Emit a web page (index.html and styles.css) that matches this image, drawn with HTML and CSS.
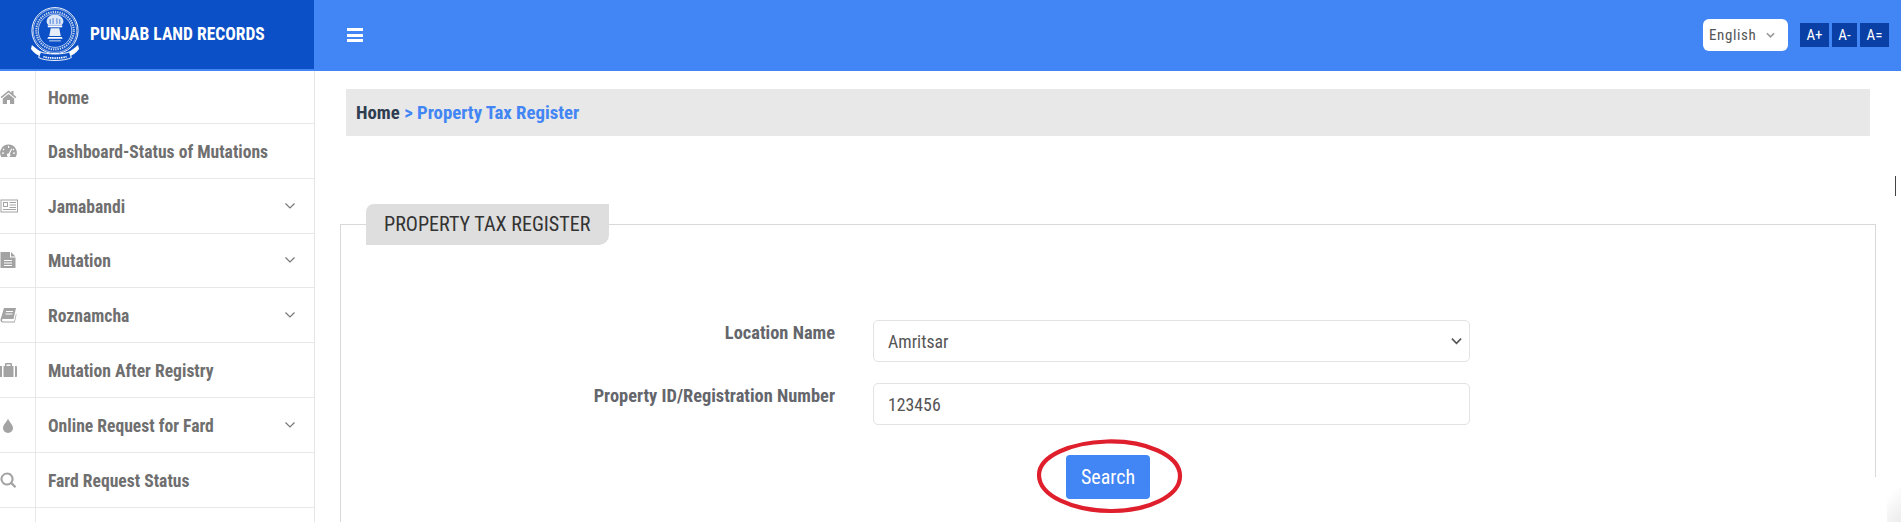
FILE: index.html
```html
<!DOCTYPE html>
<html lang="en">
<head>
<meta charset="utf-8">
<title>Property Tax Register</title>
<link rel="stylesheet" href="styles.css">
</head>
<body>
<header class="topbar">
  <div class="brand">
    <svg class="emblem" viewBox="0 0 52 58" aria-hidden="true">
      <g fill="none" stroke="#fff">
        <circle cx="26" cy="25" r="24" stroke-width="1"/>
        <circle cx="26" cy="25" r="22.6" stroke-width=".6"/>
        <circle cx="26" cy="25" r="19.5" stroke-width="2.2" stroke-dasharray="1.4 1" opacity=".75"/>
        <circle cx="26" cy="25" r="17.4" stroke-width=".7"/>
      </g>
      <g fill="#fff">
        <path d="M17.500 14c1-3.500 4-5.500 8.500-5.500s7.500 2 8.500 5.500c.8 2-.2 4-1.500 5H19c-1.300-1-2.300-3-1.500-5z" opacity=".85"/>
        <rect x="18.500" y="19.500" width="15" height="2"/>
        <path d="M21.500 22.500h9l1.500 8h-12z" opacity=".9"/>
        <path d="M19 31.500h14l1 2H18z"/>
        <path d="M20 35h12v1.200H20z" opacity=".7"/>
        <path d="M2 40c4 3 7 6 11 8l-1 4c-4-1-8-4-11-8z"/>
        <path d="M50 40c-4 3-7 6-11 8l1 4c4-1 8-4 11-8z"/>
      </g>
      <path d="M24 12v6M28 12v6M21 13v5M31 13v5" stroke="#0b50c6" stroke-width=".7"/>
      <path d="M11 47c5 3 25 3 30 0l2 6c-7 4-27 4-34 0z" fill="#0b50c6" stroke="#fff" stroke-width="1"/>
      <path d="M14 52c6 2 18 2 24 0" fill="none" stroke="#fff" stroke-width="1.800" stroke-dasharray="1.500 .8"/>
    </svg>
    <span class="brand-name">PUNJAB LAND RECORDS</span>
  </div>
  <div class="bar">
    <button class="menu-toggle" type="button" aria-label="Menu"><span></span><span></span><span></span></button>
    <div class="bar-tools">
      <select class="lang"><option>English</option></select>
      <div class="font-sizes">
        <button class="size-btn" type="button">A+</button>
        <button class="size-btn narrow" type="button">A-</button>
        <button class="size-btn" type="button">A=</button>
      </div>
    </div>
  </div>
</header>

<div class="layout">
  <nav class="sidebar">
    <ul class="nav-list">
      <li class="nav-item">
        <span class="nav-icon"><svg viewBox="0 0 18 18"><path d="M8.500 2.500.6 9l1 1.200L8.500 4.500l6.900 5.700 1-1.200-2.900-2.400V3h-2v1.800zM2.800 10.600l5.700-4.700 5.700 4.700V16H10v-4H7v4H2.800z"/></svg></span>
        <a class="nav-label">Home</a>
      </li>
      <li class="nav-item">
        <span class="nav-icon"><svg viewBox="0 0 18 18"><path fill-rule="evenodd" d="M8.500 2.500A8.300 8.300 0 0 0 1.300 15H15.700A8.300 8.300 0 0 0 8.500 2.500zM8 4h1.200v2H8zM3.500 6.500l1 1-.9.900-1-1zM13.500 6.500l.9.900-1 1-.9-.9zM2 10.500h2v1.200H2zM13 10.500h2v1.200h-2zM11.200 6.500l.9.500L9.800 12a1.700 1.700 0 1 1-1.100-.5z"/></svg></span>
        <a class="nav-label">Dashboard-Status of Mutations</a>
      </li>
      <li class="nav-item">
        <span class="nav-icon"><svg viewBox="0 0 18 18"><path fill-rule="evenodd" d="M.5 2.500H18v13H.5zM1.500 3.500v11H17v-11zM3 5h5v5H3zM4 6v3h3V6zM9.500 5H16v1H9.500zM9.500 7.500H16v1H9.500zM9.500 10H16v1H9.500zM3 12h13v1H3z"/></svg></span>
        <a class="nav-label">Jamabandi</a>
        <svg class="chevron" viewBox="0 0 12 8"><path d="M1.500 1.500 6 6l4.500-4.500"/></svg>
      </li>
      <li class="nav-item">
        <span class="nav-icon"><svg viewBox="0 0 18 18"><path fill-rule="evenodd" d="M.5 1H10v5.500h5.500V17H.5zM4 9v1h8V9zM4 11.500v1h8v-1zM4 14v1h8v-1zM11 1l4.500 4.500H11z"/></svg></span>
        <a class="nav-label">Mutation</a>
        <svg class="chevron" viewBox="0 0 12 8"><path d="M1.500 1.500 6 6l4.500-4.500"/></svg>
      </li>
      <li class="nav-item">
        <span class="nav-icon"><svg viewBox="0 0 18 18"><path fill-rule="evenodd" d="M4 2h12l-2.500 11H3.500c-1 0-1.500.6-1.500 1.200S2.500 15.500 3.500 15.500h10.800l1.700-8 .5 1-1.700 8H3C1.500 16.500.5 15.500.5 14c0-.5.1-1 .3-1.500zM6 5v1h7V5zM5.500 7.500v1h7v-1z"/></svg></span>
        <a class="nav-label">Roznamcha</a>
        <svg class="chevron" viewBox="0 0 12 8"><path d="M1.500 1.500 6 6l4.500-4.500"/></svg>
      </li>
      <li class="nav-item">
        <span class="nav-icon"><svg viewBox="0 0 18 18"><path fill-rule="evenodd" d="M0 5h2v11H0zM3.500 5H5V3.200C5 2.500 5.500 2 6.200 2h4.600c.7 0 1.200.5 1.200 1.200V5h1.500v11h-10zM6.500 3.500V5h4V3.500zM15 5h1c.6 0 1 .4 1 1v9c0 .6-.4 1-1 1h-1z"/></svg></span>
        <a class="nav-label">Mutation After Registry</a>
      </li>
      <li class="nav-item">
        <span class="nav-icon"><svg viewBox="0 0 18 18"><path d="M8 2.500c-.5 2.500-5 6-5 9.500a5 5 0 0 0 10 0c0-3.500-4.500-7-5-9.500z"/></svg></span>
        <a class="nav-label">Online Request for Fard</a>
        <svg class="chevron" viewBox="0 0 12 8"><path d="M1.500 1.500 6 6l4.500-4.500"/></svg>
      </li>
      <li class="nav-item">
        <span class="nav-icon"><svg viewBox="0 0 18 18"><path fill-rule="evenodd" d="M7 1.500a6.500 6.500 0 1 0 3.900 11.700l3.800 3.800 1.600-1.600-3.800-3.800A6.500 6.500 0 0 0 7 1.500zM7 3.500a4.500 4.500 0 1 1 0 9 4.500 4.500 0 0 1 0-9z"/></svg></span>
        <a class="nav-label">Fard Request Status</a>
      </li>
      <li class="nav-item"><span class="nav-icon"></span></li>
    </ul>
  </nav>

  <main class="content">
    <div class="crumbs"><span class="crumb-home">Home</span> <span class="crumb-current">&gt; Property Tax Register</span></div>

    <fieldset class="panel">
      <legend class="panel-title">PROPERTY TAX REGISTER</legend>
      <form class="form">
        <div class="field">
          <label class="field-label" for="loc">Location Name</label>
          <select class="control select" id="loc"><option>Amritsar</option></select>
        </div>
        <div class="field">
          <label class="field-label" for="pid">Property ID/Registration Number</label>
          <input class="control" id="pid" type="text" value="123456">
        </div>
        <div class="actions">
          <div class="action-wrap">
            <button class="search-btn" type="button">Search</button>
            <svg class="circled" viewBox="0 0 145 74" aria-hidden="true"><path d="M70 2.500C108 1.500 143 16 143 37c0 20-32 35.500-70 35C36 71.500 2 57 2 36 2 17 34 3.500 70 2.500z"/></svg>
          </div>
        </div>
      </form>
    </fieldset>

    <div class="edge-patch"></div>
    <div class="caret-mark"></div>
    <div class="corner-shade"></div>
  </main>
</div>
</body>
</html>
```
FILE: styles.css
```css
* { box-sizing: border-box; }

html, body {
  margin: 0;
  height: 522px;
  overflow: hidden;
  background: #fff;
}

body {
  font-family: Roboto, "Liberation Sans", sans-serif;
  font-stretch: 75%;
  color: #333;
}

.topbar {
  display: flex;
  height: 71px;
  background: #4285f4;
}

.brand {
  display: flex;
  align-items: flex-start;
  width: 314px;
  height: 69px;
  padding: 6px 0 0 30px;
  background: #0b50c6;
}

.emblem {
  width: 50px;
  height: 57px;
  flex: none;
}

.brand-name {
  margin: 18px 0 0 10px;
  color: #fff;
  font-size: 17.500px;
  line-height: 20px;
  font-weight: 700;
  white-space: nowrap;
}

.bar {
  flex: 1;
  display: flex;
  align-items: center;
  justify-content: space-between;
  height: 70px;
  padding: 0 12px 0 33px;
}

.menu-toggle {
  display: flex;
  flex-direction: column;
  justify-content: space-between;
  width: 16px;
  height: 14px;
  padding: 0;
  border: 0;
  background: none;
}

.menu-toggle span {
  display: block;
  height: 3px;
  background: #fff;
}

.bar-tools {
  display: flex;
  align-items: center;
  gap: 12px;
}

.lang {
  width: 85px;
  height: 32px;
  padding: 0 6px;
  border: 0;
  border-radius: 6px;
  appearance: none;
  background: #fff url("data:image/svg+xml,%3Csvg xmlns='http://www.w3.org/2000/svg' viewBox='0 0 10 7'%3E%3Cpath d='M1 1l4 4 4-4' fill='none' stroke='%23999' stroke-width='1.800'/%3E%3C/svg%3E") no-repeat right 13px center / 9px 7px;
  color: #555;
  font: inherit;
  font-size: 15px;
  letter-spacing: .6px;
}

.font-sizes {
  display: flex;
  gap: 3px;
}

.size-btn {
  width: 29px;
  height: 24px;
  padding: 0;
  border: 0;
  background: #0a3fa6;
  color: #fff;
  font: inherit;
  font-size: 15px;
}

.size-btn.narrow { width: 25px; }

.layout {
  display: flex;
  height: 451px;
}

.sidebar {
  width: 315px;
  flex: none;
  border-right: 1px solid #e6e6e6;
}

.nav-list {
  margin: 0;
  padding: 0;
  list-style: none;
}

.nav-item {
  display: flex;
  align-items: center;
  height: 54.800px;
  border-bottom: 1px solid #e8e8e8;
}

.nav-item:nth-child(1) { height: 53px; }
.nav-item:last-child { height: 20px; border-bottom: 0; }

.nav-icon {
  display: flex;
  align-items: center;
  width: 36px;
  height: 100%;
  flex: none;
  border-right: 1px solid #e8e8e8;
}

.nav-icon svg {
  width: 18px;
  height: 18px;
  fill: #a3a3a3;
}

.nav-label {
  flex: 1;
  padding: 2px 0 0 12px;
  color: #6f6f6f;
  font-size: 17.600px;
  font-weight: 700;
  white-space: nowrap;
}

.chevron {
  width: 12px;
  height: 8px;
  margin-right: 18px;
  fill: none;
  stroke: #777;
  stroke-width: 1.200;
}

.content {
  position: relative;
  flex: 1;
  padding: 18px 0 0;
  overflow: hidden;
}

.crumbs {
  height: 47px;
  margin: 0 31px;
  padding-left: 10px;
  background: #e8e8e8;
  font-size: 18.800px;
  line-height: 48px;
  font-weight: 700;
}

.crumb-home { color: #2e3d50; }
.crumb-current { color: #4285f4; }

.panel {
  height: 400px;
  margin: 68px 25px 0;
  padding: 0;
  border: 1px solid #d9d9d9;
}

.panel-title {
  height: 41px;
  margin-left: 25px;
  padding: 0 19px 0 18px;
  border-radius: 8px 0 10px 0;
  background: #dedede;
  color: #333;
  font-size: 20.100px;
  line-height: 41px;
}

.form { padding-top: 75px; }

.field {
  display: grid;
  grid-template-columns: 494px 597px;
  column-gap: 38px;
  margin-bottom: 21px;
}

.field-label {
  padding-top: 1px;
  color: #64666c;
  font-size: 18.400px;
  line-height: 24px;
  font-weight: 700;
  text-align: right;
}

.control {
  width: 100%;
  height: 42px;
  padding: 1px 14px 0;
  border: 1px solid #e3e3e3;
  border-radius: 5px;
  background: #fff;
  color: #555;
  font: inherit;
  font-size: 17.800px;
}

.select {
  appearance: none;
  background: #fff url("data:image/svg+xml,%3Csvg xmlns='http://www.w3.org/2000/svg' viewBox='0 0 12 8'%3E%3Cpath d='M1 1.500l5 5 5-5' fill='none' stroke='%23555' stroke-width='1.800'/%3E%3C/svg%3E") no-repeat right 7px center / 11px 8px;
}

.actions {
  display: flex;
  justify-content: center;
  margin-top: 30px;
}

.action-wrap { position: relative; }

.search-btn {
  display: block;
  width: 84px;
  height: 44px;
  padding: 0;
  border: 0;
  border-radius: 4px;
  background: #4285f4;
  color: #fff;
  font: inherit;
  font-size: 20px;
}

.circled {
  position: absolute;
  left: -29px;
  top: -16px;
  width: 145px;
  height: 74px;
  overflow: visible;
  fill: none;
  stroke: #e01f2d;
  stroke-width: 4.200;
}

.edge-patch {
  position: absolute;
  right: 24px;
  top: 406px;
  width: 3px;
  height: 45px;
  background: #fff;
}

.caret-mark {
  position: absolute;
  right: 5px;
  top: 105px;
  width: 1px;
  height: 20px;
  background: #444;
}

.corner-shade {
  position: absolute;
  right: 0;
  bottom: 0;
  width: 14px;
  height: 35px;
  background: linear-gradient(135deg, #fff 20%, #ececec 100%);
}
```
